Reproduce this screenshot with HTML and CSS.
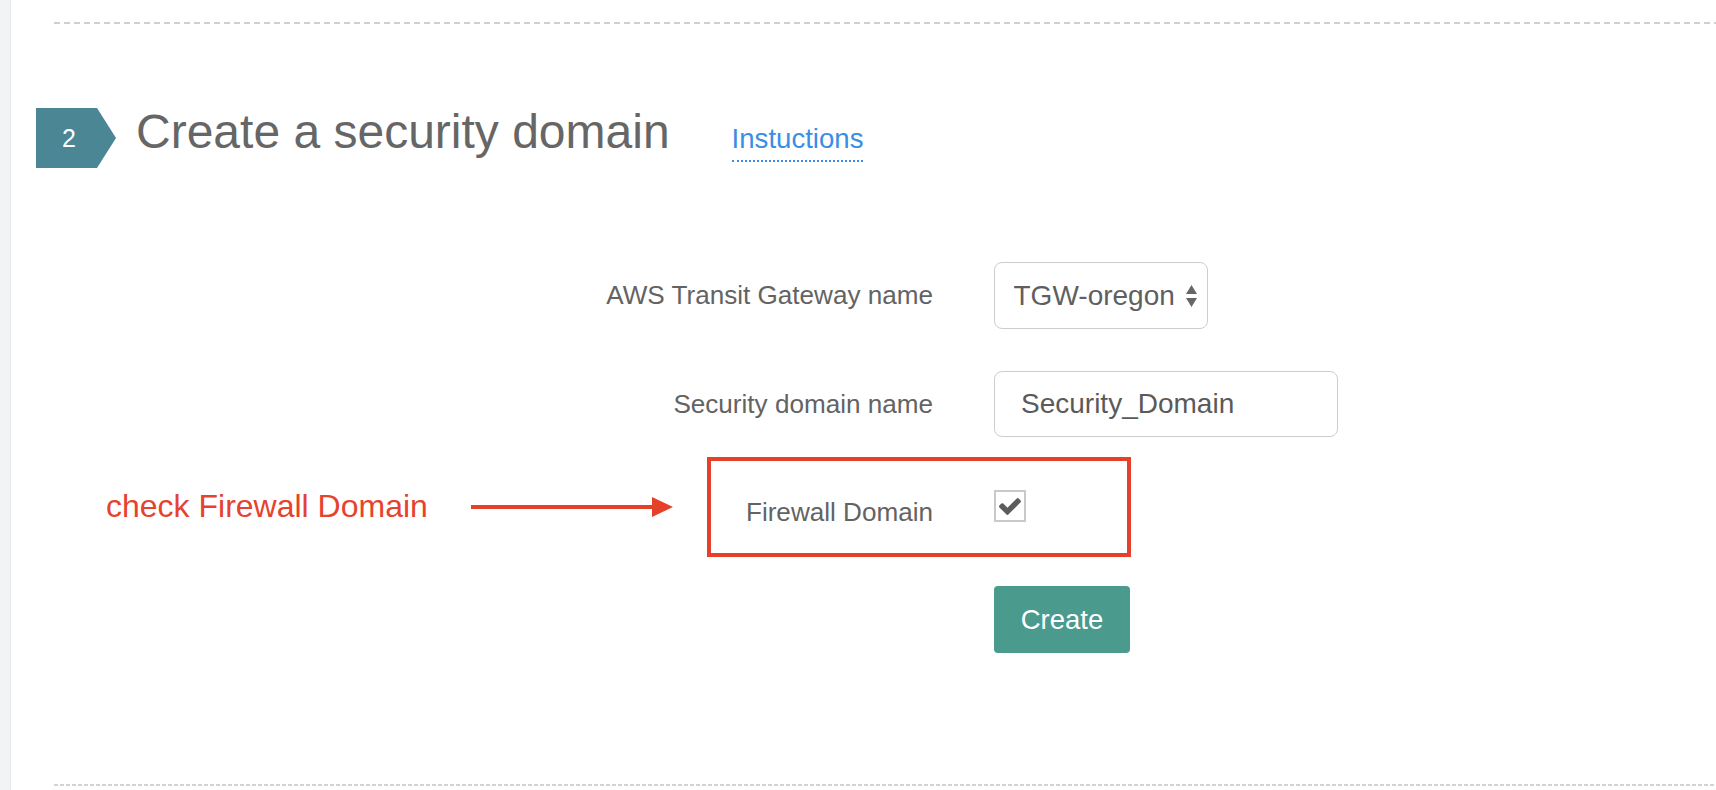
FILE: index.html
```html
<!DOCTYPE html>
<html lang="en">
<head>
<meta charset="utf-8">
<title>Create a security domain</title>
<link rel="stylesheet" href="styles.css">
</head>
<body>
<div class="page">
  <aside class="rail"></aside>
  <main class="content">
    <div class="rule rule-dashed"></div>

    <header class="step-head">
      <div class="step-badge"><span>2</span></div>
      <h2 class="step-title">Create a security domain</h2>
      <a class="step-link" href="#">Instuctions</a>
    </header>

    <form class="form">
      <div class="field field-tgw">
        <label class="field-label">AWS Transit Gateway name</label>
        <div class="select">
          <span class="select-value">TGW-oregon</span>
          <svg class="select-arrows" width="11" height="22" viewBox="0 0 11 22"><path d="M0 9 L5.5 0 L11 9 Z M0 13 L11 13 L5.5 22 Z" fill="#666"/></svg>
        </div>
      </div>

      <div class="field field-name">
        <label class="field-label">Security domain name</label>
        <input class="text-input" type="text" value="Security_Domain">
      </div>

      <div class="field field-fw">
        <div class="note">check Firewall Domain</div>
        <svg class="note-arrow" width="202" height="22" viewBox="0 0 202 22"><path d="M0 11 H184" stroke="#e4402a" stroke-width="4"/><path d="M181 1 L202 11 L181 21 Z" fill="#e4402a"/></svg>
        <div class="highlight"></div>
        <label class="field-label field-label-fw">Firewall Domain</label>
        <span class="checkbox"><svg width="22" height="17" viewBox="121 334 1550 1188"><path fill="#5c5c5c" d="M1671 566q0 40-28 68l-724 724-136 136q-28 28-68 28t-68-28l-136-136-362-362q-28-28-28-68t28-68l136-136q28-28 68-28t68 28l294 295 656-657q28-28 68-28t68 28l136 136q28 28 28 68z"/></svg></span>
      </div>

      <div class="field field-submit">
        <span class="field-label"></span>
        <button class="btn" type="button">Create</button>
      </div>
    </form>

    <div class="rule rule-dotted"></div>
  </main>
</div>
</body>
</html>
```

FILE: styles.css
```css
* { box-sizing: border-box; }

html, body {
  margin: 0;
  padding: 0;
  background: #fff;
  overflow: hidden;
}

body {
  font-family: "Liberation Sans", Arial, Helvetica, sans-serif;
  color: #666;
}

.page {
  display: flex;
  min-height: 790px;
}

.rail {
  flex: 0 0 11px;
  background: #f2f3f5;
  border-right: 1px solid #e7e8ea;
}

.content {
  flex: 1;
  padding: 22px 0 0 43px;
}

.rule {
  height: 2px;
}

.rule-dashed {
  background: repeating-linear-gradient(to right, #cfcfcf 0 6px, transparent 6px 10px);
}

.rule-dotted {
  margin-top: 131px;
  background: repeating-linear-gradient(to right, #d2d2d2 0 4px, transparent 4px 6px);
}

/* header */
.step-head {
  display: flex;
  align-items: flex-start;
  margin-top: 84px;
  margin-left: -18px;
  height: 60px;
}

.step-badge {
  width: 80px;
  height: 60px;
  background: #4b8694;
  clip-path: polygon(0 0, 61px 0, 80px 50%, 61px 100%, 0 100%);
  color: #fff;
  font-size: 25px;
  display: flex;
  align-items: center;
  padding-left: 26px;
}

.step-title {
  margin: 0 0 0 20px;
  font-weight: normal;
  font-size: 48px;
  line-height: 48px;
  color: #666;
  white-space: nowrap;
}

.step-link {
  margin: 17px 0 0 62px;
  font-size: 27.6px;
  line-height: 27px;
  color: #3a8ee4;
  text-decoration: none;
  padding-bottom: 8px;
  border-bottom: 2px dotted #3a8ee4;
}

/* form */
.form {
  margin-top: 94px;
}

.field {
  display: flex;
  align-items: center;
  gap: 61px;
  position: relative;
}

.field-label {
  flex: 0 0 879px;
  text-align: right;
  font-size: 26.1px;
  color: #636363;
  white-space: nowrap;
}

.field-name { margin-top: 42px; }
.field-fw { margin-top: 53px; align-items: flex-start; height: 32px; }
.field-submit { margin-top: 64px; }

.select {
  width: 214px;
  height: 67px;
  border: 1.5px solid #cdcdcd;
  border-radius: 8px;
  display: flex;
  align-items: center;
  padding: 0 10px 0 18.5px;
  font-size: 28px;
  color: #5f5f5f;
}

.select-arrows {
  margin-left: auto;
}

.text-input {
  width: 344px;
  height: 66px;
  border: 1.5px solid #cdcdcd;
  border-radius: 8px;
  padding: 0 0 0 26px;
  font-family: "Liberation Sans", Arial, sans-serif;
  font-size: 28px;
  color: #5a5a5a;
  outline: none;
}

.field-label-fw {
  line-height: 30px;
  margin-top: 7px;
}

.checkbox {
  width: 32px;
  height: 32px;
  border: 2px solid #c9c9c9;
  display: flex;
  align-items: center;
  justify-content: center;
  background: #fff;
}

.btn {
  width: 136px;
  height: 67px;
  border: none;
  border-radius: 4px;
  background: #4a9a8e;
  color: #fff;
  font-family: "Liberation Sans", Arial, sans-serif;
  font-size: 27.5px;
  padding: 0;
}

/* annotation overlays */
.note {
  position: absolute;
  left: 52px;
  top: -4px;
  font-size: 32px;
  line-height: 40px;
  color: #e6432f;
  white-space: nowrap;
}

.note-arrow {
  position: absolute;
  left: 417px;
  top: 6px;
}

.highlight {
  position: absolute;
  left: 653px;
  top: -33px;
  width: 424px;
  height: 100px;
  border: 4px solid #e5402a;
  pointer-events: none;
}
```
